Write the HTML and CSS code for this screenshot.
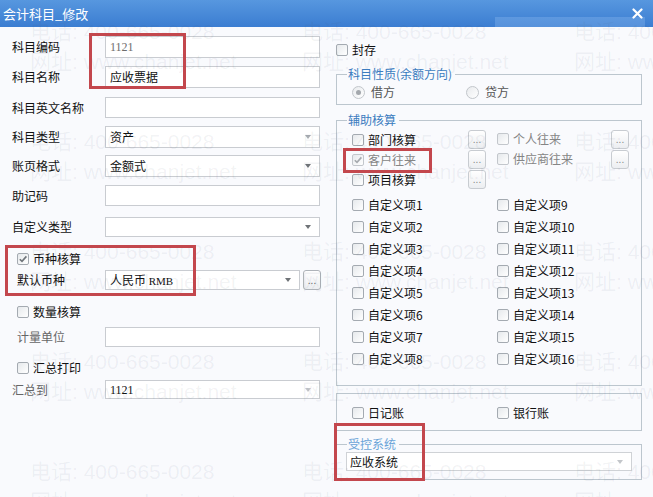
FILE: index.html
```html
<!DOCTYPE html>
<html lang="zh-CN">
<head>
<meta charset="utf-8">
<title>会计科目_修改</title>
<link rel="stylesheet" href="styles.css">
</head>
<body>
<div class="window">
  <div class="titlebar">
    <span class="title">会计科目_修改</span>
    <span class="title-glow"></span>
    <svg class="close" width="11" height="11" viewBox="0 0 11 11"><path d="M1.5 1.5 L9.5 9.5 M9.5 1.5 L1.5 9.5" stroke="#fff" stroke-width="2.2" stroke-linecap="round"/></svg>
  </div>
  <div class="body">
    <div class="left">
      <div class="row row-code"><span class="label">科目编码</span><div class="field"><span class="num muted">1121</span></div></div>
      <div class="row row-name"><span class="label">科目名称</span><div class="field"><span>应收票据</span></div></div>
      <div class="row row-en"><span class="label">科目英文名称</span><div class="field h21"></div></div>
      <div class="row row-type"><span class="label">科目类型</span><div class="field select"><span>资产</span><span class="arrow light"></span></div></div>
      <div class="row row-format"><span class="label">账页格式</span><div class="field select"><span>金额式</span><span class="arrow"></span></div></div>
      <div class="row row-memo"><span class="label">助记码</span><div class="field h21"></div></div>
      <div class="row row-custom"><span class="label">自定义类型</span><div class="field select h20"><span class="arrow"></span></div></div>

      <div class="check-row row-currency"><span class="box checked"><svg width="10" height="10" viewBox="0 0 10 10"><path d="M1.8 5.2 L4 7.4 L8.4 2.4" fill="none" stroke="#6f747a" stroke-width="1.6"/></svg></span><span>币种核算</span></div>
      <div class="row sub row-defcur"><span class="label sub-label">默认币种</span><div class="field select h20 short"><span>人民币 <span class="num small">RMB</span></span><span class="arrow"></span></div><span class="dots">...</span></div>

      <div class="check-row row-qty"><span class="box"></span><span>数量核算</span></div>
      <div class="row sub row-unit"><span class="label sub-label muted-label">计量单位</span><div class="field h20"></div></div>

      <div class="check-row row-sum"><span class="box"></span><span>汇总打印</span></div>
      <div class="row row-sumto"><span class="label muted-label">汇总到</span><div class="field select h19"><span class="num">1121</span><span class="arrow faint"></span></div></div>
    </div>

    <div class="right">
      <div class="check-row seal"><span class="box"></span><span>封存</span></div>

      <fieldset class="group nature">
        <legend>科目性质(余额方向)</legend>
        <div class="radio-row">
          <div class="opt"><span class="radio on"></span><span class="dim">借方</span></div>
          <div class="opt"><span class="radio"></span><span class="dim">贷方</span></div>
        </div>
      </fieldset>

      <fieldset class="group aux">
        <legend>辅助核算</legend>
        <div class="aux-top">
          <div class="item"><span class="box"></span><span>部门核算</span></div>
          <div class="btn-cell"><span class="dots">...</span></div>
          <div class="item item-up"><span class="box off"></span><span class="gray">个人往来</span></div>
          <div class="btn-cell"><span class="dots">...</span></div>

          <div class="item"><span class="box off checked"><svg width="10" height="10" viewBox="0 0 10 10"><path d="M1.8 5.2 L4 7.4 L8.4 2.4" fill="none" stroke="#a5a9ae" stroke-width="1.6"/></svg></span><span class="gray">客户往来</span></div>
          <div class="btn-cell"><span class="dots">...</span></div>
          <div class="item item-up"><span class="box off"></span><span class="gray">供应商往来</span></div>
          <div class="btn-cell"><span class="dots">...</span></div>

          <div class="item"><span class="box"></span><span>项目核算</span></div>
          <div class="btn-cell"><span class="dots">...</span></div>
        </div>
        <div class="aux-custom">
          <div class="item"><span class="box"></span><span>自定义项1</span></div>
          <div class="item"><span class="box"></span><span>自定义项2</span></div>
          <div class="item"><span class="box"></span><span>自定义项3</span></div>
          <div class="item"><span class="box"></span><span>自定义项4</span></div>
          <div class="item"><span class="box"></span><span>自定义项5</span></div>
          <div class="item"><span class="box"></span><span>自定义项6</span></div>
          <div class="item"><span class="box"></span><span>自定义项7</span></div>
          <div class="item"><span class="box"></span><span>自定义项8</span></div>
          <div class="item"><span class="box"></span><span>自定义项9</span></div>
          <div class="item"><span class="box"></span><span>自定义项10</span></div>
          <div class="item"><span class="box"></span><span>自定义项11</span></div>
          <div class="item"><span class="box"></span><span>自定义项12</span></div>
          <div class="item"><span class="box"></span><span>自定义项13</span></div>
          <div class="item"><span class="box"></span><span>自定义项14</span></div>
          <div class="item"><span class="box"></span><span>自定义项15</span></div>
          <div class="item"><span class="box"></span><span>自定义项16</span></div>
        </div>
      </fieldset>

      <fieldset class="group books">
        <div class="books-row">
          <div class="item wide"><span class="box"></span><span>日记账</span></div>
          <div class="item"><span class="box"></span><span>银行账</span></div>
        </div>
      </fieldset>

      <fieldset class="group control">
        <legend>受控系统</legend>
        <div class="field select ctrl-select"><span>应收系统</span><span class="arrow faint"></span></div>
      </fieldset>
    </div>

    <div class="watermarks">
      <div class="wm"><div>电话: 400-665-0028</div><div>网址: www.chanjet.net</div></div>
      <div class="wm"><div>电话: 400-665-0028</div><div>网址: www.chanjet.net</div></div>
      <div class="wm"><div>电话: 400-665-0028</div><div>网址: www.chanjet.net</div></div>
      <div class="wm"><div>电话: 400-665-0028</div><div>网址: www.chanjet.net</div></div>
      <div class="wm"><div>电话: 400-665-0028</div><div>网址: www.chanjet.net</div></div>
      <div class="wm"><div>电话: 400-665-0028</div><div>网址: www.chanjet.net</div></div>
      <div class="wm"><div>电话: 400-665-0028</div><div>网址: www.chanjet.net</div></div>
      <div class="wm"><div>电话: 400-665-0028</div><div>网址: www.chanjet.net</div></div>
      <div class="wm"><div>电话: 400-665-0028</div><div>网址: www.chanjet.net</div></div>
      <div class="wm"><div>电话: 400-665-0028</div><div>网址: www.chanjet.net</div></div>
      <div class="wm"><div>电话: 400-665-0028</div><div>网址: www.chanjet.net</div></div>
      <div class="wm"><div>电话: 400-665-0028</div><div>网址: www.chanjet.net</div></div>
      <div class="wm"><div>电话: 400-665-0028</div><div>网址: www.chanjet.net</div></div>
      <div class="wm"><div>电话: 400-665-0028</div><div>网址: www.chanjet.net</div></div>
      <div class="wm"><div>电话: 400-665-0028</div><div>网址: www.chanjet.net</div></div>
    </div>
  </div>

  <div class="mark mark-code"></div>
  <div class="mark mark-currency"></div>
  <div class="mark mark-customer"></div>
  <div class="mark mark-control"></div>
</div>
</body>
</html>
```

FILE: styles.css
```css
* { box-sizing: border-box; }
html, body { margin: 0; padding: 0; }
body {
  background: #f9fafd;
  font-family: "Noto Sans CJK SC", "Noto Sans", sans-serif;
  font-size: 12px;
  line-height: 16px;
  color: #111;
}
.window {
  position: relative;
  width: 653px;
  height: 497px;
  overflow: hidden;
  background: #f9fafd;
}

/* title bar */
.titlebar {
  position: relative;
  height: 27px;
  display: flex;
  align-items: center;
  padding-left: 3px;
  background: linear-gradient(#5797df, #3b7dd1);
  color: #fff;
}
.title { font-size: 13px; line-height: 16px; position: relative; z-index: 1; }
.title-glow {
  position: absolute;
  left: 495px;
  top: 17px;
  width: 150px;
  height: 10px;
  background: rgba(140, 185, 240, 0.35);
}
.close { margin-left: auto; margin-right: 10px; position: relative; z-index: 1; }

/* body */
.body {
  position: relative;
  display: flex;
  height: 470px;
}
.left {
  width: 336px;
  display: flex;
  flex-direction: column;
}
.row {
  display: flex;
  align-items: center;
  padding-left: 12px;
}
.row.sub { padding-left: 17px; }
.label { width: 93px; flex: none; }
.sub-label { width: 88px; }
.muted-label { color: #666; }

.field {
  width: 215px;
  height: 22px;
  border: 1px solid #c9ccd1;
  background: #fff;
  display: flex;
  align-items: center;
  padding-left: 4px;
  flex: none;
}
.field.h21 { height: 21px; }
.field.h20 { height: 20px; }
.field.h19 { height: 19px; }
.field.short { width: 195px; }
.arrow {
  margin-left: auto;
  margin-right: 8px;
  width: 0;
  height: 0;
  border-left: 3px solid transparent;
  border-right: 3px solid transparent;
  border-top: 4px solid #6f7377;
}
.arrow.light { border-top-color: #a9adb2; }
.arrow.faint { border-top-color: #c3c6ca; }

.num { font-family: "Liberation Serif", serif; font-size: 12px; }
.num.small { font-size: 11px; }
.muted { color: #6d6d6d; }

.dots {
  width: 18px;
  height: 20px;
  margin-left: 3px;
  border: 1px solid #aeb3b9;
  border-radius: 3px;
  background: linear-gradient(#ffffff, #eceef1);
  color: #666;
  font-family: "Liberation Sans", sans-serif;
  font-size: 10px;
  line-height: 10px;
  display: flex;
  align-items: flex-end;
  justify-content: center;
  padding-bottom: 3px;
  flex: none;
}

.row-code { margin-top: 9px; }
.row-name { margin-top: 8px; }
.row-en { margin-top: 9px; }
.row-type { margin-top: 8px; }
.row-format { margin-top: 7px; }
.row-memo { margin-top: 8px; }
.row-custom { margin-top: 11px; }
.row-currency { margin-top: 13px; }
.row-defcur { margin-top: 2px; }
.row-qty { margin-top: 13px; }
.row-unit { margin-top: 6px; }
.row-sum { margin-top: 12px; }
.row-sumto { margin-top: 3px; }

/* checkboxes */
.check-row {
  display: flex;
  align-items: center;
  gap: 4px;
  height: 18px;
  padding-left: 17px;
}
.box {
  width: 12px;
  height: 12px;
  flex: none;
  border: 1px solid #a4aab1;
  border-radius: 2px;
  background: linear-gradient(135deg, #e6e9ec, #ffffff);
  display: flex;
  align-items: center;
  justify-content: center;
}
.box.off { border-color: #c3c7cc; }
.gray { color: #858585; }
.dim { color: #555; }

/* right column */
.right {
  width: 306px;
  display: flex;
  flex-direction: column;
}
.seal {
  margin-top: 15px;
  height: 16px;
  padding-left: 0;
}
.group {
  margin: 0;
  min-width: 0;
  padding: 0 0 0 10px;
  border: 1px solid #bcc6ce;
}
.group legend {
  padding: 0 3px 0 1px;
  line-height: 14px;
  color: #3b7cbf;
}
.nature { margin-top: 9px; padding-top: 3px; padding-bottom: 4px; }
.radio-row {
  display: flex;
  height: 16px;
  align-items: center;
  padding-left: 5px;
}
.opt { display: flex; align-items: center; gap: 6px; width: 114px; }
.radio {
  width: 13px;
  height: 13px;
  border-radius: 50%;
  border: 1px solid #c2c6cb;
  background: linear-gradient(135deg, #e8eaed, #fff);
  display: flex;
  align-items: center;
  justify-content: center;
}
.radio.on::after {
  content: "";
  width: 5px;
  height: 5px;
  border-radius: 50%;
  background: #a3a7ac;
}

.aux { margin-top: 8px; padding-top: 3px; padding-bottom: 15px; }
.aux-top {
  display: grid;
  grid-template-columns: 116px 29px 114px 19px;
  grid-auto-rows: 20px;
  padding-left: 5px;
}
.item {
  display: flex;
  align-items: center;
  gap: 4px;
}
.item-up { margin-top: -3px; }
.btn-cell { display: flex; align-items: flex-start; }
.btn-cell .dots {
  margin-left: 0;
  height: 19px;
  border-color: #c8ccd1;
  color: #888;
}
.aux-custom {
  margin-top: 4px;
  display: grid;
  grid-template-rows: repeat(8, 22px);
  grid-template-columns: 145px 1fr;
  grid-auto-flow: column;
  padding-left: 5px;
}

.books { margin-top: 7px; padding-top: 11px; padding-bottom: 9px; }
.books-row { display: flex; height: 16px; padding-left: 5px; }
.item.wide { width: 145px; }

.control { margin-top: 6px; padding-top: 1px; padding-bottom: 8px; }
.control legend { color: #6aa4d8; }
.ctrl-select {
  width: 286px;
  height: 19px;
  margin-left: -1px;
  padding-left: 3px;
  border-color: #cfd2d6;
}

/* faint watermark overlay */
.watermarks {
  position: absolute;
  left: 30px;
  top: -10px;
  display: grid;
  grid-template-columns: repeat(3, 272px);
  grid-auto-rows: 110px;
  pointer-events: none;
  font-family: "Liberation Sans", "Noto Sans CJK SC", sans-serif;
  font-size: 21px;
  line-height: 30px;
  color: rgba(70, 85, 110, 0.07);
  white-space: nowrap;
}

/* red annotation boxes */
.mark {
  position: absolute;
  border: 3px solid #c3474d;
  pointer-events: none;
}
.mark-code { left: 89px; top: 33px; width: 97px; height: 56px; }
.mark-currency { left: 5px; top: 245px; width: 191px; height: 51px; }
.mark-customer { left: 343px; top: 148px; width: 89px; height: 25px; }
.mark-control { left: 334px; top: 423px; width: 91px; height: 58px; }
```
